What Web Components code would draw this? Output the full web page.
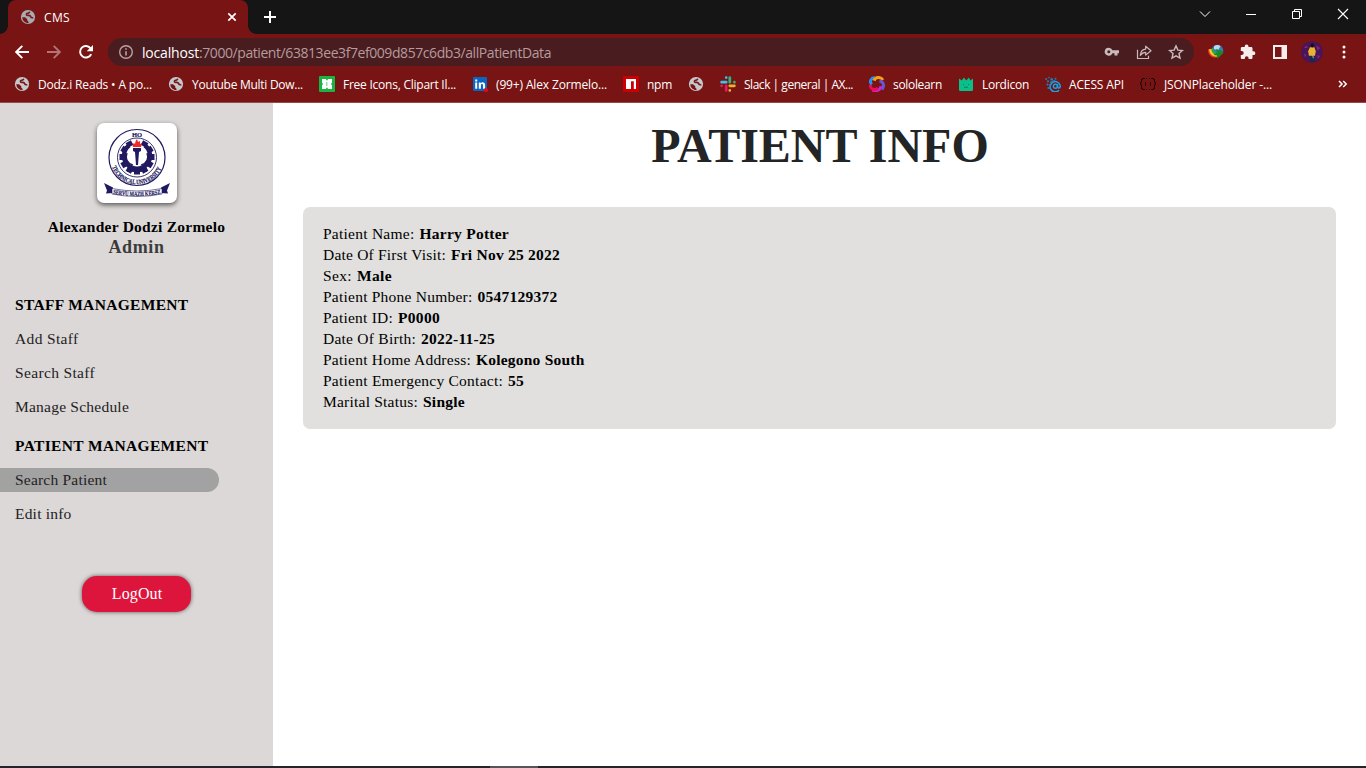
<!DOCTYPE html>
<html lang="en">
<head>
<meta charset="utf-8">
<title>CMS</title>
<style>
html,body{margin:0;height:100%;overflow:hidden;background:#fff}
</style>
</head>
<body>
<cms-window></cms-window>
<script>
const define=(name,html,ready)=>customElements.define(name,class extends HTMLElement{
  constructor(){super();this.attachShadow({mode:'open'});}
  connectedCallback(){
    this.shadowRoot.innerHTML=typeof html==='function'?html(this):html;
    if(ready)ready(this);
  }
});

/* Single-line label; "w" is the advance width it is tracked to. */
define('fit-text','<style>:host{display:inline-block;white-space:pre;flex:none}</style><span><slot></slot></span>',el=>{
  const w=+el.getAttribute('w');
  const n=el.textContent.length;
  const s=el.shadowRoot.querySelector('span');
  const natural=s.getBoundingClientRect().width;
  if(w&&n&&natural){s.style.letterSpacing=((w-natural)/n).toFixed(4)+'px';el.style.width=w+'px';}
});

const icons={
 globe:'<circle cx="8" cy="8" r="7.100" fill="currentColor"/><path d="M2.200 8.300H5l2.300 2v1.500l1.200.9v1.500A6.200 6.200 0 0 1 2.200 8.300z" fill="#781414"/><path d="M9.800 2.800Q9.200 4.300 7.600 4.400 6.200 4.600 6.500 5.700 6.800 6.600 8.500 6.400 10.200 6.200 10.700 7.700 11 9 13.300 8.700" fill="none" stroke="#781414" stroke-width="1.600"/>',
 close:'<path d="M4.300 4.300l7.400 7.400M11.700 4.300l-7.400 7.400" stroke="#fff" stroke-width="1.700"/>',
 plus:'<path d="M8 2v12M2 8h12" stroke="#fff" stroke-width="2"/>',
 down:'<path d="M3 5.500l5 5 5-5" fill="none" stroke="#fff" stroke-width="1"/>',
 min:'<path d="M3 8.500h10" stroke="#fff" stroke-width="1"/>',
 restore:'<path d="M3.500 5.500h7v7h-7zM5.500 5.500v-2h7v7h-2" fill="none" stroke="#fff"/>',
 x:'<path d="M3 3l10 10M13 3L3 13" stroke="#fff" stroke-width="1.100"/>',
 back:'<path d="M15 8H2.500M8.300 1.800L2.100 8l6.200 6.200" fill="none" stroke="#fff" stroke-width="1.900"/>',
 fwd:'<path d="M1 8h12.500M7.700 1.800L13.900 8l-6.200 6.200" fill="none" stroke="#b37476" stroke-width="1.900"/>',
 reload:'<path d="M13.200 10.100A5.800 5.800 0 1 1 12.700 4.500" fill="none" stroke="#fff" stroke-width="2"/><path d="M15 .900v6.300H8.700z" fill="#fff"/>',
 info:'<circle cx="8" cy="8" r="6.300" fill="none" stroke="#bba3a4" stroke-width="1.400"/><path d="M8 7.200v4.300M8 4.200v1.500" stroke="#bba3a4" stroke-width="1.600"/>',
 key:'<path d="M4.800 3.700a4 4 0 1 0 3.600 5.500h2.100v2.300h3V9.200H15V6.300H8.400a4 4 0 0 0-3.600-2.600zm0 2.600a1.500 1.500 0 1 1 0 3 1.500 1.500 0 0 1 0-3z" fill="#c9bbbc"/>',
 share:'<path d="M1.500 5.800V14.500H12.500V11.800" fill="none" stroke="#c9bbbc" stroke-width="1.200"/><path d="M4.300 11.300c.4-4 2.300-6 5.400-6.200V2.200L15 6.700l-5.300 4.400V8.300c-2.200 0-3.900.8-5.400 3z" fill="none" stroke="#c9bbbc" stroke-width="1.200" stroke-linejoin="round"/>',
 star:'<path d="M8 1.900l1.900 4.200 4.500.5-3.400 3 1 4.500L8 11.800l-4 2.300 1-4.500-3.400-3 4.500-.5z" fill="none" stroke="#c9bbbc" stroke-width="1.400"/>',
 idm:'<circle cx="9.400" cy="6.500" r="5.800" fill="#347bc0"/><path d="M6 2.200Q9-.2 12.500 2L10 6.500 6 5z" fill="#bad9f0"/><path d="M.2 5.200C-.6 10.500 4 14.700 9.500 13.300l-.3-2.600C6 11 3.500 8.500 3.400 4.800z" fill="#eb3a2b"/><path d="M1.200 5.200C1.200 9.800 5 13 9.400 12.500V9.800C6.500 9.800 4.600 8 4.400 4.800z" fill="#f5d329"/><path d="M3.200 5C3.600 9 6 10.800 9 11V9C7 8.500 5.500 7 5.400 4.600z" fill="#38a832"/><path d="M8 4.700l7.800 3.300-6.300 6.800-.5-3.200-3.700-.6 3.900-2.600z" fill="#138c23"/>',
 puzzle:'<path d="M13.500 7.300h-1V4.500c0-.8-.6-1.400-1.400-1.400H8.500V2.400a1.900 1.900 0 0 0-3.800 0v.7H2.100C1.300 3.100.8 3.700.8 4.500v2.600h.9a2 2 0 0 1 0 4H.8v2.600c0 .8.600 1.400 1.300 1.400h2.700v-.9a1.900 1.900 0 0 1 3.800 0v.9h2.500c.8 0 1.400-.6 1.400-1.400V11h1a1.850 1.850 0 0 0 0-3.700z" fill="#f6eeee"/>',
 panel:'<path d="M1 1h14v14H1zM3 3v10h6.500V3z" fill="#f6eeee" fill-rule="evenodd"/>',
 menu:'<circle cx="8" cy="3" r="1.500" fill="#fff"/><circle cx="8" cy="8" r="1.500" fill="#fff"/><circle cx="8" cy="13" r="1.500" fill="#fff"/>',
 avatar:'<circle cx="8" cy="8" r="7.900" fill="#4a1458"/><path d="M2 5l2-2 1 2zM11 3l3 2-2 2zM2 9l2 1-1 2zM12 10l2 1-2 2z" fill="#7b2779"/><path d="M6.500 9h3.300l.2 6.300H6.700z" fill="#152c48"/><path d="M6.500 4.500h3.200l1 3-.5 3.200H5.800L5.200 7.500z" fill="#e8b52c"/><ellipse cx="8.200" cy="3.200" rx="1.200" ry="1.500" fill="#151019"/><path d="M8 8.500l1 4" stroke="#d5a880" stroke-width=".7"/>',
 clip:'<rect width="16" height="16" rx="1" fill="#1bb442"/><path d="M3 3h4.200v1.200h1.600V3H13v3.600L12 8l1 1.400V13H8.800v-1.200H7.200V13H3V9.400L4 8 3 6.600z" fill="#fff"/><path d="M7.800 6v4" stroke="#1bb442" stroke-width=".7"/>',
 linkedin:'<rect x="1" y="1" width="14" height="14" rx="1" fill="#0a66c2"/><path d="M3.200 6.500h2v6.200h-2zM3.200 3.400h2v2h-2zM6.800 6.500h1.900v1c1.200-1.900 4.400-1.400 4.400 1.500v3.700H11V9.300c0-1.800-2.100-1.500-2.100.1v3.300H6.800z" fill="#fff"/><circle cx="14" cy="14" r="2.100" fill="#d31020"/>',
 npm:'<rect width="16" height="16" fill="#cb0000"/><path d="M3 3h10v10h-2.200V5.300H8V13H3z" fill="#fff"/>',
 slack:'<g stroke-width="2.700" stroke-linecap="round"><path d="M6.200 1.600h.01M1.600 6.200h4.600" stroke="#36c5f0"/><path d="M9.800 1.600v4.600M14.400 6.200h.01" stroke="#2eb67d"/><path d="M9.800 9.800h4.600M9.800 14.400h.01" stroke="#ecb22e"/><path d="M6.200 9.800v4.600M1.600 9.800h.01" stroke="#e01e5a"/></g>',
 solo:'<g fill="none" stroke-width="3"><path d="M5.800 1.600C2 2 0 5.500 2.800 8.400" stroke="#2193ef"/><path d="M5 4.600C6.500.6 11.800.5 14 4" stroke="#f6a016"/><path d="M10.500 4.800c4.600 1.400 5 5.500 2.500 8.700" stroke="#6755d8"/><path d="M12 10.200c-.4 4-4.500 5.500-8.700 3.800" stroke="#c02bd0"/><path d="M8.800 12.400C4.600 15 1.300 12.600 1.200 9" stroke="#f20b54"/></g>',
 lord:'<path d="M1 2.500l2.700 2L6 1.500l2.200 3L11 1.500l1.500 3L15 2.500v11.200q0 1.300-1.300 1.300H2.300Q1 15 1 13.700z" fill="#0abf88"/><path d="M5.500 8v1M10.500 8v1M6 11q2 1 4 0" stroke="#087f60" fill="none"/>',
 access:'<g fill="#1d81b8"><circle cx="1.200" cy="3" r="1"/><circle cx="4" cy="1.500" r=".8"/><circle cx="3" cy="5.300" r="1.100"/><circle cx="6.700" cy="3.300" r="1.300"/><circle cx="10.500" cy="2.700" r="1"/><circle cx="2.500" cy="8.500" r="1.100"/><circle cx="3.300" cy="12" r="1"/></g><path d="M14 14.200A5.100 5.100 0 1 1 15.300 10c0 2.700-2.700 2.500-2.700.6V8.300" fill="none" stroke="#11a6ef" stroke-width="1.500"/><circle cx="10.400" cy="10.300" r="2" fill="none" stroke="#11a6ef" stroke-width="1.400"/><path d="M5 6.500Q7 4.500 10 4.500M4.800 8v5" stroke="#1d81b8" fill="none" stroke-width="1.200"/>',
 json:'<path d="M5 2.500H2.500v1h-1v3h-1v2h1v4h1v1H5M6 2.500h1M9 2.500h1M6 13.500h1M9 13.500h1M11 2.500h2.500v1h1v3h1v2h-1v4h-1v1H11M5.500 6v4M10.500 6v4" fill="none" stroke="#220708" stroke-width="1"/>',
 more:'<path d="M4 5l3 3-3 3M8.200 5l3 3-3 3" fill="none" stroke="#fff" stroke-width="1.500"/>'
};
define('cms-icon',el=>`<style>:host{display:block;flex:none;width:16px;height:16px}svg{display:block;width:100%;height:100%}</style><svg viewBox="0 0 16 16">${icons[el.getAttribute('name')]}</svg>`);

define('tab-strip',`<style>
:host{display:flex;height:34px;background:#151515;color:#fff;font:12px "Open Sans",sans-serif;padding-left:8px}
.tab{position:relative;box-sizing:border-box;width:240px;height:34px;background:#781414;border-radius:8px 8px 0 0;display:flex;align-items:center;padding:0 8px 0 12px}
.tab::before,.tab::after{content:"";position:absolute;bottom:0;width:8px;height:8px}
.tab::before{left:-8px;background:radial-gradient(circle at 0 0,#151515 7.5px,#781414 8px)}
.tab::after{right:-8px;background:radial-gradient(circle at 100% 0,#151515 7.5px,#781414 8px)}
.g{color:#a8abb0;margin-right:8px}.sp{flex:1}.plus{margin:9px 0 0 14px}
.win{display:flex;height:28px}.win div{width:46px;display:grid;place-items:center}
</style><div class="tab"><cms-icon class="g" name="globe"></cms-icon><fit-text w="26">CMS</fit-text><span class="sp"></span><cms-icon name="close"></cms-icon></div>
<cms-icon class="plus" name="plus"></cms-icon><span class="sp"></span>
<div class="win"><div><cms-icon name="down"></cms-icon></div><div><cms-icon name="min"></cms-icon></div><div><cms-icon name="restore"></cms-icon></div><div><cms-icon name="x"></cms-icon></div></div>`);

define('tool-bar',`<style>
:host{display:flex;align-items:center;height:36px;background:#781414;padding:0 6px}
.b{width:32px;height:32px;display:grid;place-items:center;flex:none}
.pill{flex:1;height:28px;margin:0 6px;border-radius:14px;background:#491c1f;display:flex;align-items:center;box-sizing:border-box;padding:0 2px 0 10px;font:14px "Open Sans",sans-serif;color:#b59b9d}
.pill cms-icon.i{margin-right:8px}.h{color:#fff}.sp{flex:1}.av{width:22px;height:22px}
</style><div class="b"><cms-icon name="back"></cms-icon></div><div class="b"><cms-icon name="fwd"></cms-icon></div><div class="b"><cms-icon name="reload"></cms-icon></div>
<div class="pill"><cms-icon class="i" name="info"></cms-icon><fit-text class="h" w="57">localhost</fit-text><fit-text w="352">:7000/patient/63813ee3f7ef009d857c6db3/allPatientData</fit-text><span class="sp"></span>
<div class="b"><cms-icon name="key"></cms-icon></div><div class="b"><cms-icon name="share"></cms-icon></div><div class="b"><cms-icon name="star"></cms-icon></div></div>
<div class="b"><cms-icon name="idm"></cms-icon></div><div class="b"><cms-icon name="puzzle"></cms-icon></div><div class="b"><cms-icon name="panel"></cms-icon></div><div class="b"><cms-icon class="av" name="avatar"></cms-icon></div><div class="b"><cms-icon name="menu"></cms-icon></div>`);

define('book-mark',el=>`<style>:host{display:flex;align-items:center;gap:8px;flex:none}cms-icon{color:#c5c8cd}</style><cms-icon name="${el.getAttribute('icon')}"></cms-icon>${el.textContent?`<fit-text w="${el.getAttribute('w')}">${el.textContent}</fit-text>`:''}`);
define('bookmark-bar',`<style>
:host{display:flex;align-items:center;gap:16px;height:28px;background:#781414;border-bottom:1px solid #984a4a;padding:0 15px 4px 14px;color:#fff;font:12px "Open Sans",sans-serif}
.more{margin-left:auto}
</style><book-mark icon="globe" w="114">Dodz.i Reads • A po...</book-mark><book-mark icon="globe" w="111">Youtube Multi Dow...</book-mark><book-mark icon="clip" w="113">Free Icons, Clipart Il...</book-mark><book-mark icon="linkedin" w="111">(99+) Alex Zormelo...</book-mark><book-mark icon="npm" w="25">npm</book-mark><book-mark icon="globe"></book-mark><book-mark icon="slack" w="109">Slack | general | AX...</book-mark><book-mark icon="solo" w="49">sololearn</book-mark><book-mark icon="lord" w="47">Lordicon</book-mark><book-mark icon="access" w="55">ACESS API</book-mark><book-mark icon="json" w="108">JSONPlaceholder -...</book-mark><cms-icon class="more" name="more"></cms-icon>`);

const teeth=Array.from({length:12},(_,i)=>i*30).filter(a=>a!==0).map(a=>`<rect x="-3" y="-17.500" width="6" height="5" transform="rotate(${a})"/>`).join('');
define('school-crest',`<style>
:host{display:block;width:80px;height:80px;border-radius:7px;background:#fff;box-shadow:0 2px 5px #0009}
svg{display:block}text{font-family:"Liberation Serif",serif;font-weight:bold;fill:#211a60;stroke:#211a60;stroke-width:.2}
</style><svg width="80" height="80" viewBox="0 0 80 80">
<defs><path id="arc" d="M15 44A26.700 26.700 0 0 0 65 44"/><path id="rib" d="M15 70.500Q40 75.500 65 70.500"/></defs>
<g fill="none" stroke="#211a60"><circle cx="40" cy="34.500" r="28" stroke-width="1.200"/><circle cx="40" cy="34.500" r="19.500" stroke-width=".9"/></g>
<text x="40" y="13.500" font-size="6.500" text-anchor="middle">HO</text>
<g fill="#211a60" transform="translate(40 34)">${teeth}</g>
<path d="M32 22.500A13 13 0 1 0 48 22.500" fill="none" stroke="#211a60" stroke-width="4.500"/>
<path d="M30 30q-3 9 6 12M50 30q3 9-6 12" fill="none" stroke="#211a60" stroke-width="1.300"/>
<path d="M36 25h8v3l-2 1-1 13h-2l-1-13-2-1z" fill="#211a60"/>
<path d="M36 24q-1-3 1-4l1 1q0-3 2-5l1 3 2-1v3l2-1-1 4z" fill="#ef2a2a"/>
<path d="M30 46q6-2 10 1 4-3 10-1v3q-6-1-10 1-4-2-10-1z" fill="#211a60"/>
<text font-size="6.600"><textPath href="#arc" textLength="63" lengthAdjust="spacingAndGlyphs">TECHNICAL UNIVERSITY</textPath></text>
<path d="M7 60l9 4.500v5.500l-7 .5 1-3zM73 60l-9 4.500v5.500l7 .5-1-3z" fill="#211a60"/>
<path d="M15 65.500Q40 70.500 65 65.500v5.500Q40 76 15 71z" fill="#fff" stroke="#211a60" stroke-width=".6"/>
<text font-size="6.200"><textPath href="#rib" startOffset="1" textLength="48" lengthAdjust="spacingAndGlyphs">SERVU MAZH KERSZ</textPath></text></svg>`);

define('nav-item',`<style>:host{display:flex;align-items:center;width:219px;height:24px;line-height:18px;box-sizing:border-box;padding-left:15px;color:#222;border-radius:0 12px 12px 0}:host([active]){background:#a2a2a2}</style><slot></slot>`);
define('nav-group',`<style>:host{display:block}h3{margin:0 0 12px;padding-left:15px;font-size:15.5px;line-height:21px;font-weight:bold;color:#000}</style><h3><slot name="title"></slot></h3><slot></slot>`);
define('side-bar',`<style>
:host{display:flex;flex-direction:column;width:273px;flex:none;box-sizing:border-box;background:#dcd8d7;padding-top:20px;font:15.5px "Liberation Serif",serif}
school-crest{align-self:center}
.name{align-self:center;margin:14px 0 1px;line-height:19px;font-weight:bold;color:#000}
.role{align-self:center;line-height:20px;font-weight:bold;font-size:18px;color:#3b3b3b}
nav-group{margin-top:37px}nav-group+nav-group{margin-top:6px}
nav-item{margin-bottom:10px}
button{align-self:center;margin:40px 0 0;width:109px;height:36px;border:0;border-radius:15px;background:#dd143b;color:#fff;font:16px "Liberation Serif",serif;box-shadow:0 0 4px #0009;padding:0 0 0 1px}
</style><school-crest></school-crest><fit-text class="name" w="177.500">Alexander Dodzi Zormelo</fit-text><fit-text class="role" w="56">Admin</fit-text>
<nav-group><fit-text slot="title" w="173.500">STAFF MANAGEMENT</fit-text><nav-item><fit-text w="63.500">Add Staff</fit-text></nav-item><nav-item><fit-text w="80">Search Staff</fit-text></nav-item><nav-item><fit-text w="114">Manage Schedule</fit-text></nav-item></nav-group>
<nav-group><fit-text slot="title" w="193.500">PATIENT MANAGEMENT</fit-text><nav-item active><fit-text w="92">Search Patient</fit-text></nav-item><nav-item><fit-text w="56.500">Edit info</fit-text></nav-item></nav-group>
<button><fit-text w="50.500">LogOut</fit-text></button>`);

define('info-row',el=>`<style>:host{display:flex;height:21px;line-height:21px}b{margin-left:5px}</style><fit-text w="${el.getAttribute('lw')}">${el.getAttribute('label')}</fit-text><b><fit-text w="${el.getAttribute('vw')}">${el.textContent}</fit-text></b>`);
define('patient-card',`<style>:host{display:block;box-sizing:border-box;height:222px;border-radius:7px;background:#e1e0de;padding:16px 20px;color:#000;font-size:15.5px}</style><slot></slot>`);
define('patient-page',`<style>
:host{display:block;flex:1;background:#fff;padding:0 30px;font:15.5px "Liberation Serif",serif}
h1{margin:15px 0 33px;height:56px;line-height:56px;font-size:48px;text-align:center;color:#222425;padding-left:1px}
</style><h1><fit-text w="337.500">PATIENT INFO</fit-text></h1><patient-card>
<info-row label="Patient Name:" lw="91.500" vw="89.500">Harry Potter</info-row>
<info-row label="Date Of First Visit:" lw="123" vw="109">Fri Nov 25 2022</info-row>
<info-row label="Sex:" lw="29" vw="35">Male</info-row>
<info-row label="Patient Phone Number:" lw="149.500" vw="80">0547129372</info-row>
<info-row label="Patient ID:" lw="70" vw="42">P0000</info-row>
<info-row label="Date Of Birth:" lw="93" vw="74">2022-11-25</info-row>
<info-row label="Patient Home Address:" lw="148" vw="108.500">Kolegono South</info-row>
<info-row label="Patient Emergency Contact:" lw="180" vw="16">55</info-row>
<info-row label="Marital Status:" lw="95" vw="42">Single</info-row></patient-card>`);

define('task-edge','<style>:host{display:block;height:2px;background:#242529;padding-left:490px}i{display:block;width:48px;height:2px;background:#55565a}</style><i></i>');
define('cms-window',`<style>:host{display:flex;flex-direction:column;width:1366px;height:768px;overflow:hidden}main{display:flex;flex:1;min-height:0}</style><tab-strip></tab-strip><tool-bar></tool-bar><bookmark-bar></bookmark-bar><main><side-bar></side-bar><patient-page></patient-page></main><task-edge></task-edge>`);
</script>
</body>
</html>
